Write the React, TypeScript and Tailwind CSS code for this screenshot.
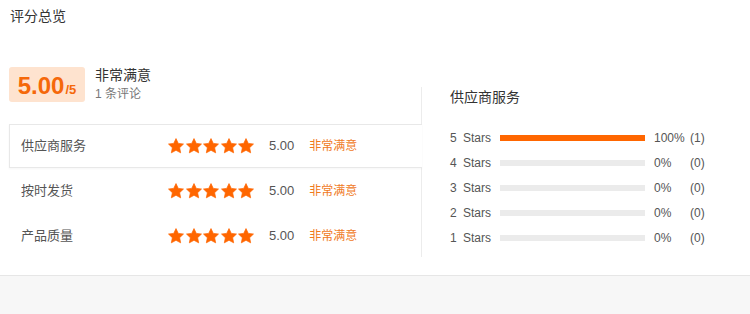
const font = { fontFamily: '"Liberation Sans", "Noto Sans CJK SC", sans-serif' };

const rows = [
  { label: "供应商服务", score: "5.00", text: "非常满意", active: true },
  { label: "按时发货", score: "5.00", text: "非常满意", active: false },
  { label: "产品质量", score: "5.00", text: "非常满意", active: false },
];

const dist = [
  { stars: 5, pct: 100, count: 1 },
  { stars: 4, pct: 0, count: 0 },
  { stars: 3, pct: 0, count: 0 },
  { stars: 2, pct: 0, count: 0 },
  { stars: 1, pct: 0, count: 0 },
];

function Star() {
  return (
    <svg viewBox="1 1 22 22" className="h-[16px] w-[16px]" aria-hidden="true">
      <path
        d="M12 1.8l3.1 6.6 7.2.9-5.3 5 1.4 7.1L12 17.9l-6.4 3.5 1.4-7.1-5.3-5 7.2-.9z"
        fill="#ff6600"
        stroke="#ff6600"
        strokeWidth="1"
        strokeLinejoin="round"
      />
    </svg>
  );
}

export default function App() {
  return (
    <div className="h-[314px] w-[750px] bg-[#f7f7f7] text-[#333]" style={font}>
      <div className="h-[276px] border-b border-[#e6e6e6] bg-white px-[9px] pt-[7px]">
        <h2 className="ml-px text-[14px] leading-[18px] text-[#333]">评分总览</h2>

        <div className="flex items-end">
          {/* left column */}
          <div className="w-[412px]">
            <div className="mt-[42px] flex items-center">
              <div className="flex h-[35px] w-[76px] items-baseline justify-center rounded-[3px] bg-[#fee3cf] pt-[2px] text-[#f5680a]">
                <span className="text-[24px] leading-[33px] font-bold">5.00</span>
                <span className="ml-px text-[13px] font-bold">/5</span>
              </div>
              <div className="ml-[10px] -mt-[2px] flex flex-col">
                <span className="text-[14px] leading-[18px] text-[#333]">非常满意</span>
                <span className="mt-[2px] text-[12px] leading-[16px] text-[#777]">1 条评论</span>
              </div>
            </div>

            <div className="mt-[22px]">
              {rows.map((r) => (
                <div
                  key={r.label}
                  className={
                    r.active
                      ? "relative z-10 -mr-px flex h-[44px] items-center border-y border-l border-[#e8e8e8] bg-white pl-[11px] shadow-[0_1px_2px_rgba(0,0,0,0.04)]"
                      : "flex h-[45px] items-center pl-[12px]"
                  }
                >
                  <span className="w-[147px] text-[13px] text-[#555]">{r.label}</span>
                  <div className="flex gap-[1.5px]">
                    <Star />
                    <Star />
                    <Star />
                    <Star />
                    <Star />
                  </div>
                  <span className="ml-[15px] text-[13px] text-[#555]">{r.score}</span>
                  <span className="ml-[15px] text-[12px] text-[#f07a1e]">{r.text}</span>
                </div>
              ))}
            </div>
          </div>

          {/* right column */}
          <div className="mb-[1px] h-[170px] flex-1 border-l border-[#ececec] pl-[28px] pt-[1px]">
            <h3 className="text-[14px] leading-[18px] text-[#333]">供应商服务</h3>
            <div className="mt-[24px] flex flex-col gap-[9px]">
              {dist.map((d) => (
                <div key={d.stars} className="flex h-[16px] items-center text-[12px] text-[#555]">
                  <span className="w-[7px]">{d.stars}</span>
                  <span className="ml-[6px] w-[37px]">Stars</span>
                  <div className="h-[6px] w-[145px] bg-[#ebebeb]">
                    <div className="h-full bg-[#ff6600]" style={{ width: `${d.pct}%` }} />
                  </div>
                  <span className="ml-[9px] w-[36px]">{d.pct}%</span>
                  <span>({d.count})</span>
                </div>
              ))}
            </div>
          </div>
        </div>
      </div>
    </div>
  );
}
